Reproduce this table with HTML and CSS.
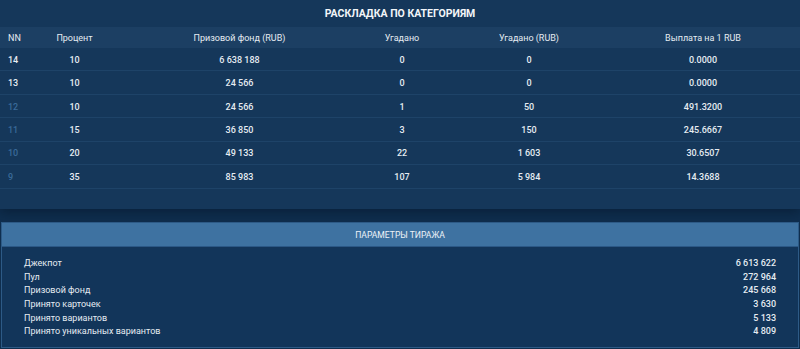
FILE: index.html
```html
<!DOCTYPE html>
<html lang="ru">
<head>
<meta charset="utf-8">
<title>Раскладка по категориям</title>
<link rel="stylesheet" href="styles.css">
</head>
<body>
<section class="card">
  <h2 class="title">РАСКЛАДКА ПО КАТЕГОРИЯМ</h2>
  <div class="grid">
    <div class="row head">
      <div class="c nn">NN</div><div class="c">Процент</div><div class="c">Призовой фонд (RUB)</div><div class="c">Угадано</div><div class="c">Угадано (RUB)</div><div class="c">Выплата на 1 RUB</div>
    </div>
    <div class="row">
      <div class="c nn">14</div><div class="c">10</div><div class="c">6 638 188</div><div class="c">0</div><div class="c">0</div><div class="c">0.0000</div>
    </div>
    <div class="row">
      <div class="c nn">13</div><div class="c">10</div><div class="c">24 566</div><div class="c">0</div><div class="c">0</div><div class="c">0.0000</div>
    </div>
    <div class="row">
      <div class="c nn dim">12</div><div class="c">10</div><div class="c">24 566</div><div class="c">1</div><div class="c">50</div><div class="c">491.3200</div>
    </div>
    <div class="row">
      <div class="c nn dim">11</div><div class="c">15</div><div class="c">36 850</div><div class="c">3</div><div class="c">150</div><div class="c">245.6667</div>
    </div>
    <div class="row">
      <div class="c nn dim">10</div><div class="c">20</div><div class="c">49 133</div><div class="c">22</div><div class="c">1 603</div><div class="c">30.6507</div>
    </div>
    <div class="row">
      <div class="c nn dim">9</div><div class="c">35</div><div class="c">85 983</div><div class="c">107</div><div class="c">5 984</div><div class="c">14.3688</div>
    </div>
  </div>
</section>
<section class="panel">
  <h3 class="panel-head">ПАРАМЕТРЫ ТИРАЖА</h3>
  <div class="params">
    <div class="param"><span>Джекпот</span><span class="val">6 613 622</span></div>
    <div class="param"><span>Пул</span><span class="val">272 964</span></div>
    <div class="param"><span>Призовой фонд</span><span class="val">245 668</span></div>
    <div class="param"><span>Принято карточек</span><span class="val">3 630</span></div>
    <div class="param"><span>Принято вариантов</span><span class="val">5 133</span></div>
    <div class="param"><span>Принято уникальных вариантов</span><span class="val">4 809</span></div>
  </div>
</section>
</body>
</html>
```

FILE: styles.css
```css
* { box-sizing: border-box; }
html, body { margin: 0; padding: 0; }
body {
  width: 800px;
  height: 349px;
  overflow: hidden;
  background: #0f2e4e;
  font-family: Roboto, "Noto Sans", sans-serif;
  font-size: 9px;
  font-weight: 500;
  color: #e6ecf2;
}
.card {
  height: 209px;
  background: #15375a;
  box-shadow: 0 4px 10px rgba(6, 24, 44, 0.55);
}
.title {
  margin: 0;
  height: 27px;
  display: flex;
  align-items: center;
  justify-content: center;
  font-size: 10.5px;
  font-weight: 700;
  color: #f2f5f8;
}
.row {
  display: grid;
  grid-template-columns: 22px 105px 225px 100px 154px 194px;
  height: 23.45px;
  border-bottom: 1px solid #1e4368;
  align-items: center;
}
.row.head {
  height: 21px;
  background: #1c3f63;
  border-bottom: none;
  font-weight: 400;
}
.c {
  text-align: center;
  white-space: nowrap;
  line-height: 12px;
  padding-top: 1px;
}
.c.nn {
  text-align: left;
  padding-left: 8px;
}
.c.dim { color: #3a6a99; }
.panel {
  margin: 13px 1px 0;
  height: 126px;
  border: 1px solid #2d5a86;
  background: #12355a;
}
.panel-head {
  margin: 0;
  height: 24px;
  display: flex;
  align-items: center;
  justify-content: center;
  background: #3e72a1;
  border-bottom: 1px solid #2b5886;
  font-size: 8.6px;
  font-weight: 400;
  color: #eef3f8;
}
.params {
  padding: 10px 22px 0 22px;
  font-weight: 400;
}
.param {
  display: flex;
  justify-content: space-between;
  height: 13.7px;
  line-height: 13.7px;
}
.val { font-weight: 500; }
```
